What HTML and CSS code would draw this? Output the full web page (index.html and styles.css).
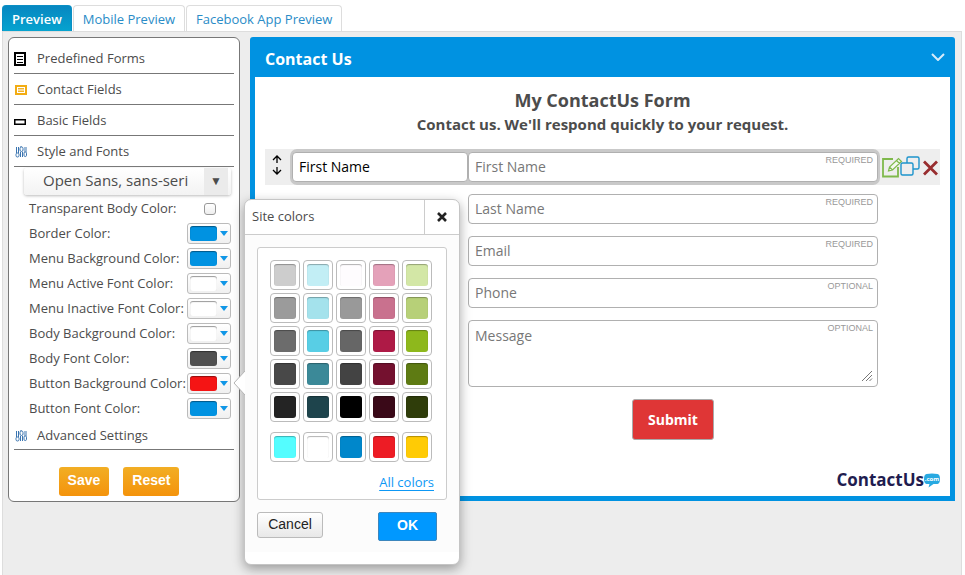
FILE: index.html
```html
<!DOCTYPE html>
<html lang="en">
<head>
<meta charset="utf-8">
<title>Form Preview</title>
<link rel="stylesheet" href="styles.css">
</head>
<body>
<nav class="tabs">
  <a class="tab active" href="#preview">Preview</a>
  <a class="tab" href="#mobile">Mobile Preview</a>
  <a class="tab" href="#facebook">Facebook App Preview</a>
</nav>
<main class="workspace">
  <section class="sidebar">
    <button type="button" class="section-link">
      <svg class="icon" viewBox="0 0 13 15"><rect x="1" y="2" width="10" height="12" fill="#fff" stroke="#000" stroke-width="2"/><path d="M3 5.500h6M3 8.500h6M3 11.500h6" stroke="#000"/></svg>
      <span>Predefined Forms</span>
    </button>
    <button type="button" class="section-link">
      <svg class="icon" viewBox="0 0 13 15"><rect x="2" y="4" width="10" height="8" fill="#fff" stroke="#f2ac13" stroke-width="2"/><path d="M4 6.500h6M4 8h6M4 9.500h6" stroke="#f2ac13" stroke-width=".9"/></svg>
      <span>Contact Fields</span>
    </button>
    <button type="button" class="section-link">
      <svg class="icon" viewBox="0 0 13 15"><rect x=".75" y="6.750" width="10.500" height="4.500" fill="none" stroke="#000" stroke-width="1.500"/></svg>
      <span>Basic Fields</span>
    </button>
    <button type="button" class="section-link">
      <svg class="icon" viewBox="0 0 13 15"><g fill="#fff" stroke="#3a74b0"><path d="M2.500 3v6M4.500 3v6M7 2v1M6.500 8v5M8.500 8v5M11 3v5M13 3v5"/><rect x="2" y="9" width="3" height="4" rx="1.500"/><rect x="6" y="3" width="3" height="4.500" rx="1.500"/><rect x="10" y="8" width="2.500" height="4.500" rx="1.200"/></g></svg>
      <span>Style and Fonts</span>
    </button>
    <div class="font-picker">
      <select class="font-select" aria-label="Font"><option>Open Sans, sans-seri</option></select>
      <span class="font-arrow" aria-hidden="true">▼</span>
    </div>
    <div class="settings">
      <div class="setting"><label for="transparent">Transparent Body Color:</label><input class="check" id="transparent" type="checkbox"></div>
      <div class="setting"><label for="c1">Border Color:</label><button type="button" class="picker" id="c1"><span class="chip blue"></span></button></div>
      <div class="setting"><label for="c2">Menu Background Color:</label><button type="button" class="picker" id="c2"><span class="chip blue"></span></button></div>
      <div class="setting"><label for="c3">Menu Active Font Color:</label><button type="button" class="picker" id="c3"><span class="chip white"></span></button></div>
      <div class="setting"><label for="c4">Menu Inactive Font Color:</label><button type="button" class="picker" id="c4"><span class="chip white"></span></button></div>
      <div class="setting"><label for="c5">Body Background Color:</label><button type="button" class="picker" id="c5"><span class="chip white"></span></button></div>
      <div class="setting"><label for="c6">Body Font Color:</label><button type="button" class="picker" id="c6"><span class="chip gray"></span></button></div>
      <div class="setting"><label for="c7">Button Background Color:</label><button type="button" class="picker" id="c7"><span class="chip red"></span></button></div>
      <div class="setting"><label for="c8">Button Font Color:</label><button type="button" class="picker" id="c8"><span class="chip blue"></span></button></div>
    </div>
    <button type="button" class="section-link compact">
      <svg class="icon" viewBox="0 0 13 15"><g fill="#fff" stroke="#3a74b0"><path d="M2.500 3v6M4.500 3v6M7 2v1M6.500 8v5M8.500 8v5M11 3v5M13 3v5"/><rect x="2" y="9" width="3" height="4" rx="1.500"/><rect x="6" y="3" width="3" height="4.500" rx="1.500"/><rect x="10" y="8" width="2.500" height="4.500" rx="1.200"/></g></svg>
      <span>Advanced Settings</span>
    </button>
    <div class="actions">
      <button type="button" class="action">Save</button>
      <button type="button" class="action">Reset</button>
    </div>
  </section>

  <form class="form-card">
    <header class="form-head">
      <span>Contact Us</span>
      <svg class="chevron" viewBox="0 0 14 8"><path d="M1 1l6 6 6-6" fill="none" stroke="#d5ebfa" stroke-width="2"/></svg>
    </header>
    <div class="form-body">
      <h1 class="form-title">My ContactUs Form</h1>
      <h2 class="form-subtitle">Contact us. We'll respond quickly to your request.</h2>
      <div class="edit-row">
        <svg class="move" viewBox="0 0 10 20"><path d="M5 1v7M1 5l4-4 4 4M5 12v7M1 15l4 4 4-4" fill="none" stroke="#000" stroke-width="1.300"/></svg>
        <div class="edit-fields">
          <input class="input label-input" aria-label="Field label" value="First Name">
          <div class="field grow"><input class="input" aria-label="First Name" placeholder="First Name"><span class="badge">REQUIRED</span></div>
        </div>
        <svg class="tools" viewBox="0 0 58 24">
          <path d="M12 4H2v17.500h15V12" fill="none" stroke="#7fb94c" stroke-width="1.800"/>
          <path d="M7.500 16l1-4 9-8.500 3 3-9 8.500zM8.500 12l3 3M15.500 5.500l3 3" fill="#f5f9f0" stroke="#7fb94c" stroke-width="1.200"/>
          <rect x="26" y="2" width="12" height="12" rx="1.500" fill="#eee" stroke="#1d94cc" stroke-width="1.400"/>
          <rect x="20" y="8" width="12" height="12" rx="1.500" fill="#eee" stroke="#1d94cc" stroke-width="1.400"/>
          <path d="M43 6.500l13 13M56 6.500l-13 13" stroke="#982d2f" stroke-width="2.800"/>
        </svg>
      </div>
      <div class="fields">
        <div class="field"><input class="input" aria-label="Last Name" placeholder="Last Name"><span class="badge">REQUIRED</span></div>
        <div class="field"><input class="input" type="email" aria-label="Email" placeholder="Email"><span class="badge">REQUIRED</span></div>
        <div class="field"><input class="input" type="tel" aria-label="Phone" placeholder="Phone"><span class="badge">OPTIONAL</span></div>
        <div class="field">
          <textarea class="input message" aria-label="Message" placeholder="Message"></textarea><span class="badge">OPTIONAL</span>
          <svg class="grip" viewBox="0 0 12 12"><path d="M1 11L11 1M5 11l6-6M8.500 11l2.500-2.500" fill="none" stroke="#777"/></svg>
        </div>
      </div>
      <button type="button" class="submit">Submit</button>
      <div class="brand">
        <span>ContactUs</span>
        <svg class="bubble" viewBox="0 0 16 15"><path d="M2.500 1Q8 0 13.500 1Q16 1.500 16 6Q16 10.500 13.500 11H9.500L4.500 14.500L5.500 11H2.500Q0 10.500 0 6Q0 1.500 2.500 1z" fill="#28a9e1"/><text x="8" y="8" text-anchor="middle">.com</text></svg>
      </div>
    </div>
  </form>

  <section class="popup" role="dialog" aria-labelledby="popup-title">
    <svg class="pointer" viewBox="0 0 12 24"><path d="M12 0L1 12l11 12" fill="#fff" stroke="#b5b5b5"/></svg>
    <header class="popup-head">
      <span id="popup-title">Site colors</span>
      <button type="button" class="close" aria-label="Close"><svg viewBox="0 0 10 10"><path d="M1 1l8 8M9 1L1 9" stroke="#222" stroke-width="2.600"/></svg></button>
    </header>
    <div class="popup-body">
      <div class="palette">
        <div class="swatches">
          <button type="button" class="swatch s1"></button><button type="button" class="swatch s2"></button><button type="button" class="swatch s3"></button><button type="button" class="swatch s4"></button><button type="button" class="swatch s5"></button>
          <button type="button" class="swatch s6"></button><button type="button" class="swatch s7"></button><button type="button" class="swatch s8"></button><button type="button" class="swatch s9"></button><button type="button" class="swatch s10"></button>
          <button type="button" class="swatch s11"></button><button type="button" class="swatch s12"></button><button type="button" class="swatch s13"></button><button type="button" class="swatch s14"></button><button type="button" class="swatch s15"></button>
          <button type="button" class="swatch s16"></button><button type="button" class="swatch s17"></button><button type="button" class="swatch s18"></button><button type="button" class="swatch s19"></button><button type="button" class="swatch s20"></button>
          <button type="button" class="swatch s21"></button><button type="button" class="swatch s22"></button><button type="button" class="swatch s23"></button><button type="button" class="swatch s24"></button><button type="button" class="swatch s25"></button>
        </div>
        <div class="swatches">
          <button type="button" class="swatch s26"></button><button type="button" class="swatch s27"></button><button type="button" class="swatch s28"></button><button type="button" class="swatch s29"></button><button type="button" class="swatch s30"></button>
        </div>
        <a class="all-colors" href="#all">All colors</a>
      </div>
      <div class="popup-actions">
        <button type="button" class="cancel">Cancel</button>
        <button type="button" class="ok">OK</button>
      </div>
    </div>
  </section>
</main>
</body>
</html>
```
FILE: styles.css
```css
* { box-sizing: border-box; }

body {
  margin: 0;
  min-height: 100vh;
  padding: 5px 3px 0 2px;
  display: flex;
  flex-direction: column;
  background: #fff;
  color: #4c4c4c;
  font-family: "Open Sans", sans-serif;
  font-size: 13px;
}

button, input, select, textarea { font: inherit; color: inherit; margin: 0; }
button { padding: 0; border: 0; background: none; }

/* Tabs */
.tabs { display: flex; gap: 1px; height: 26px; }
.tab {
  padding: 0 9px;
  line-height: 26px;
  border: 1px solid #ddd;
  border-bottom: 0;
  border-radius: 4px 4px 0 0;
  background: #fff;
  color: #2a8cc7;
  text-decoration: none;
}
.tab.active {
  border-color: #0a8fc4;
  background: linear-gradient(#0787c1, #06a3cf);
  color: #fff;
  font-weight: 600;
}

.workspace {
  position: relative;
  flex: 1;
  display: flex;
  align-items: flex-start;
  gap: 10px;
  padding: 5px 6px 0 5px;
  border: 1px solid #ddd;
  border-bottom: 0;
  background: #ededed;
}

/* Sidebar */
.sidebar {
  flex: 0 0 232px;
  padding: 5px;
  border: 1px solid #777;
  border-radius: 6px;
  background: #fff;
}
.section-link {
  display: flex;
  align-items: center;
  gap: 10px;
  width: 100%;
  height: 31px;
  border-bottom: 1px solid #777;
  text-align: left;
}
.section-link.compact { height: 29px; }
.icon { width: 13px; height: 15px; }

.font-picker {
  display: flex;
  height: 27px;
  margin: 1px 3px 1px 10px;
  padding-right: 3px;
  border-radius: 3px;
  background: linear-gradient(#fff, #f3f3f3);
  box-shadow: 0 1px 3px #bbb;
}
.font-select {
  appearance: none;
  flex: 1;
  min-width: 0;
  padding: 0 0 3px 19px;
  border: 0;
  background: none;
  font-size: 15px;
}
.font-arrow {
  width: 24px;
  background: #ebebeb;
  line-height: 25px;
  text-align: center;
  font-size: 12px;
}

.setting {
  display: flex;
  align-items: center;
  justify-content: space-between;
  height: 25px;
  margin: 0 3px 0 15px;
}
.setting label { padding-bottom: 2px; white-space: nowrap; }
.check {
  appearance: none;
  width: 12px;
  height: 12px;
  margin-right: 15px;
  border: 1px solid #999;
  border-radius: 3px;
  background: linear-gradient(#fff, #eee);
}
.picker {
  flex: none;
  display: flex;
  align-items: center;
  gap: 3px;
  width: 44px;
  height: 21px;
  padding-left: 2px;
  border: 1px solid #bbb;
  border-radius: 3px;
  background: linear-gradient(#fff, #f0f0f0);
}
.picker::after {
  content: "";
  border: 4px solid transparent;
  border-top: 5px solid #0f96e6;
  border-bottom: 0;
}
.chip {
  width: 27px;
  height: 15px;
  border-radius: 3px;
  box-shadow: inset 0 1px 1px rgba(0, 0, 0, .4);
}
.blue { background: #0092e1; }
.white { background: #fff; }
.gray { background: #505050; }
.red { background: #f51414; }

.actions {
  display: flex;
  justify-content: center;
  gap: 14px;
  padding: 17px 10px 0 0;
}
.action {
  height: 29px;
  padding: 0 9px 3px;
  border-radius: 3px;
  background: linear-gradient(#f2ae24, #f4930c);
  color: #fff;
  font-family: "Liberation Sans", sans-serif;
  font-size: 14px;
  font-weight: bold;
}

/* Form preview */
.form-card {
  flex: 1;
  min-width: 0;
  border: 5px solid #0092e1;
  border-top: 0;
  border-radius: 3px 3px 0 0;
  background: #fff;
}
.form-head {
  display: flex;
  align-items: center;
  justify-content: space-between;
  height: 40px;
  padding: 3px 5px 0 10px;
  background: #0092e1;
  color: #fff;
  font-size: 16px;
  font-weight: bold;
}
.chevron { width: 14px; height: 8px; margin-bottom: 3px; }
.form-body { padding: 11px 10px 4px; }
.form-title, .form-subtitle { margin: 0; text-align: center; line-height: 24px; }
.form-title { font-size: 18px; }
.form-subtitle { font-size: 15px; }

.edit-row {
  display: flex;
  align-items: center;
  height: 36px;
  margin: 13px 0 9px;
  background: #eee;
}
.move { width: 10px; height: 20px; margin: 0 8px 4px 7px; }
.edit-fields {
  flex: 1;
  display: flex;
  padding: 3px 2px;
  border-radius: 7px;
  background: #c9c9c9;
}
.label-input { flex: 0 0 176px; color: #000; }
.grow { flex: 1; }
.field { position: relative; display: flex; }
.input {
  width: 100%;
  min-width: 0;
  height: 30px;
  padding: 0 6px 2px;
  border: 1px solid #b0b0b0;
  border-radius: 4px;
  background: #fff;
  font-size: 14px;
}
.input::placeholder { color: #777; }
.badge {
  position: absolute;
  top: 2px;
  right: 5px;
  line-height: 12px;
  color: #999;
  font-family: "Liberation Sans", sans-serif;
  font-size: 9px;
}
.tools { width: 58px; height: 24px; margin: 0 1px; }
.fields {
  display: flex;
  flex-direction: column;
  gap: 12px;
  margin: 0 62px 12px 203px;
}
.message { height: 67px; padding: 5px 6px; resize: none; }
.grip { position: absolute; right: 5px; bottom: 5px; width: 12px; height: 12px; }
.submit {
  display: block;
  margin: 0 0 0 367px;
  width: 82px;
  height: 41px;
  padding-bottom: 1px;
  border: 1px solid #aaa;
  border-radius: 3px;
  background: #df3636;
  color: #fff;
  font-size: 14px;
  font-weight: bold;
}
.brand {
  display: flex;
  align-items: center;
  justify-content: flex-end;
  margin-top: 28px;
  color: #1f1d50;
  font-size: 17px;
  font-weight: bold;
  line-height: 24px;
}
.bubble { width: 16px; height: 15px; }
.bubble text { fill: #fff; font-size: 6px; }

/* Colour popup */
.popup {
  position: absolute;
  top: 167px;
  left: 241px;
  width: 216px;
  padding-bottom: 12px;
  border: 1px solid #c5c5c5;
  border-radius: 7px;
  background: #fff;
  box-shadow: 0 4px 12px rgba(0, 0, 0, .35);
}
.pointer { position: absolute; left: -12px; top: 171px; width: 12px; height: 24px; }
.popup-head {
  display: flex;
  height: 35px;
  border-bottom: 1px solid #ccc;
  line-height: 32px;
  padding-left: 7px;
  justify-content: space-between;
}
.close { width: 35px; border-left: 1px solid #ccc; }
.close svg { width: 10px; height: 10px; }
.popup-body { padding: 12px 12px 11px; background: #fcfcfc; }
.palette {
  display: flex;
  flex-direction: column;
  gap: 10px;
  padding: 12px;
  height: 253px;
  border: 1px solid #ccc;
  border-radius: 3px;
  background: #fff;
}
.swatches {
  display: grid;
  grid-template-columns: repeat(5, 30px);
  gap: 3px;
}
.swatch {
  height: 30px;
  padding: 3px;
  border: 1px solid #bbb;
  border-radius: 4px;
}
.swatch::before {
  content: "";
  display: block;
  height: 22px;
  border-radius: 3px;
  background: var(--color);
  box-shadow: inset 0 1px 1px rgba(0, 0, 0, .3);
}
.s1 { --color: #cdcdcd; }
.s2 { --color: #c2eef5; }
.s3 { --color: #fefcfe; }
.s4 { --color: #e4a1b9; }
.s5 { --color: #d3e7a6; }
.s6 { --color: #9b9b9b; }
.s7 { --color: #a4e2ec; }
.s8 { --color: #999; }
.s9 { --color: #c9718e; }
.s10 { --color: #b7d078; }
.s11 { --color: #6c6c6c; }
.s12 { --color: #58cee5; }
.s13 { --color: #666; }
.s14 { --color: #ae1a46; }
.s15 { --color: #8eb81c; }
.s16 { --color: #484848; }
.s17 { --color: #3b8998; }
.s18 { --color: #434343; }
.s19 { --color: #74112f; }
.s20 { --color: #5e7b13; }
.s21 { --color: #242424; }
.s22 { --color: #1e444c; }
.s23 { --color: #000; }
.s24 { --color: #3a0918; }
.s25 { --color: #2f3d0a; }
.s26 { --color: #54fdff; }
.s27 { --color: #fff; }
.s28 { --color: #0087cb; }
.s29 { --color: #ed1c25; }
.s30 { --color: #ffcb05; }

.all-colors {
  align-self: flex-end;
  color: #0d98f5;
  line-height: 20px;
  text-underline-offset: 3px;
}
.popup-actions {
  display: flex;
  align-items: flex-start;
  justify-content: space-between;
  padding: 12px 10px 0 0;
  font-family: "Liberation Sans", sans-serif;
  font-size: 14px;
}
.cancel {
  width: 66px;
  height: 26px;
  padding-bottom: 3px;
  border: 1px solid #bbb;
  border-radius: 3px;
  background: linear-gradient(#fff, #e8e8e8);
  color: #222;
}
.ok {
  width: 59px;
  height: 29px;
  padding-bottom: 3px;
  border: 1px solid #3c86bd;
  border-radius: 2px;
  background: #0098ff;
  color: #fff;
  font-weight: bold;
}
```
